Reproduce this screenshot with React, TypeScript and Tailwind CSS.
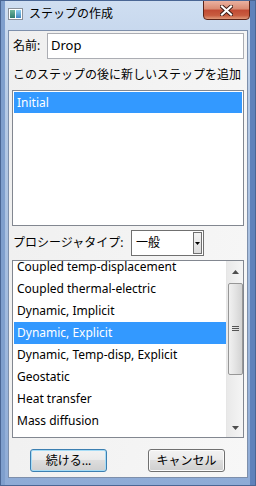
import React from 'react';

const procedures = [
  'Coupled temp-displacement',
  'Coupled thermal-electric',
  'Dynamic, Implicit',
  'Dynamic, Explicit',
  'Dynamic, Temp-disp, Explicit',
  'Geostatic',
  'Heat transfer',
  'Mass diffusion',
  'Soils',
];

function Arrow({ down }: { down?: boolean }) {
  return (
    <svg width="7" height="4" viewBox="0 0 7 4" className="block">
      {down ? <path d="M0 0h7L3.5 4z" fill="#4d4d4d" /> : <path d="M0 4h7L3.5 0z" fill="#4d4d4d" />}
    </svg>
  );
}

function WinButton({ label, isDefault }: { label: string; isDefault?: boolean }) {
  return (
    <button
      className={
        'w-[77px] h-[23px] rounded-[3px] border text-[12px] text-black flex items-center justify-center bg-[linear-gradient(#f2f2f2_0%,#ebebeb_45%,#dddddd_50%,#cfcfcf_100%)] ' +
        (isDefault ? 'border-[#3c7fb1] shadow-[inset_0_0_0_1px_#a6dcf6]' : 'border-[#707070] shadow-[inset_0_0_0_1px_#fbfbfb]')
      }
    >
      {label}
    </button>
  );
}

export default function App() {
  return (
    <div className="w-[256px] h-[486px] flex flex-col font-['Noto_Sans','Noto_Sans_CJK_JP',sans-serif] bg-[linear-gradient(#cfdef1_0%,#b7cbe6_20%,#a3bcdf_60%,#8eabd6_100%)] border border-[#4a6694] shadow-[inset_4px_0_0_#7f9fcd,inset_-5px_0_0_#5f82bb] overflow-hidden">
      {/* Title bar */}
      <div className="h-[29px] flex items-start relative">
        <div className="mt-[7px] ml-[7px] w-[15px] h-[12px] border border-[#8a9099] bg-white flex p-[1px] gap-[1px]">
          <div className="w-[5px] bg-[linear-gradient(#6fb59a,#2f7d70)]" />
          <div className="flex-1 bg-[linear-gradient(#8fd0ee,#3f86c4)]" />
        </div>
        <div className="ml-[6px] mt-[5px] text-[12px] leading-[16px] text-black">ステップの作成</div>
        <div className="ml-auto mr-[5px] -mt-[1px] w-[47px] h-[20px] rounded-b-[4px] border border-[#5b2419] bg-[linear-gradient(#eab1a0_0%,#d98a72_45%,#c14a33_50%,#c85c40_80%,#e09a7a_100%)] flex items-center justify-center">
          <svg width="13" height="11" viewBox="0 0 13 11">
            <path d="M2 1.5l9 8M11 1.5l-9 8" stroke="#3a1a14" strokeWidth="4" strokeLinecap="square" />
            <path d="M2 1.5l9 8M11 1.5l-9 8" stroke="#ffffff" strokeWidth="2.2" strokeLinecap="square" />
          </svg>
        </div>
      </div>

      {/* Client area */}
      <div className="mx-[7px] mb-[7px] flex-1 border border-[#7d8fab] bg-[linear-gradient(100deg,#efefef,#f7f7f7)] px-[3px] pt-[2px] flex flex-col text-[12px] text-black">
        <div className="h-[26px] flex items-center">
          <span className="w-[35px] pl-[1px]">名前:</span>
          <div className="flex-1 h-full border border-[#abadb3] bg-white flex items-center pl-[3px] text-[13px]">Drop</div>
        </div>

        <div className="h-[31px] flex items-center pl-[1px]">このステップの後に新しいステップを追加</div>

        <div className="h-[136px] border border-[#828790] bg-white p-[1px]">
          <div className="h-[21px] bg-[#3399ff] text-white flex items-center pl-[3px]">Initial</div>
        </div>

        <div className="h-[26px] mt-[4px] mb-[4px] flex items-center">
          <span className="w-[119px] pl-[1px]">プロシージャタイプ:</span>
          <div className="w-[73px] h-full border border-[#707070] bg-white flex items-center pl-[4px]">
            <span className="flex-1">一般</span>
            <div className="w-[9px] h-[22px] mr-[1px] border border-[#707070] bg-[linear-gradient(#f4f4f4,#dcdcdc)] flex items-center justify-center">
              <svg width="5" height="3" viewBox="0 0 5 3"><path d="M0 0h5L2.5 3z" fill="#000" /></svg>
            </div>
          </div>
        </div>

        <div className="h-[178px] border border-[#828790] bg-white flex overflow-hidden">
          <div className="flex-1 pl-[1px] overflow-hidden">
            <div className="-mt-[5px]">
              {procedures.map((p) => (
                <div
                  key={p}
                  className={'h-[22px] flex items-center pl-[3px] ' + (p === 'Dynamic, Explicit' ? 'bg-[#3399ff] text-white' : '')}
                >
                  {p}
                </div>
              ))}
            </div>
          </div>
          <div className="w-[17px] border-l border-[#e6e6e6] bg-[linear-gradient(90deg,#e9e9e9,#f5f5f5)] flex flex-col items-center">
            <div className="h-[22px] flex items-center justify-center w-full"><Arrow /></div>
            <div className="w-[15px] h-[92px] rounded-[2px] border border-[#979797] bg-[linear-gradient(90deg,#f1f1f1,#e3e3e3_50%,#d3d3d3)] flex items-center justify-center">
              <svg width="7" height="6" viewBox="0 0 7 6">
                <path d="M0 0.5h7M0 2.5h7M0 4.5h7" stroke="#555" strokeWidth="1" />
              </svg>
            </div>
            <div className="flex-1" />
            <div className="h-[18px] flex items-center justify-center w-full"><Arrow down /></div>
          </div>
        </div>

        <div className="mt-[11px] flex ml-[18px] gap-[41px]">
          <WinButton label="続ける..." isDefault />
          <WinButton label="キャンセル" />
        </div>
      </div>
    </div>
  );
}
